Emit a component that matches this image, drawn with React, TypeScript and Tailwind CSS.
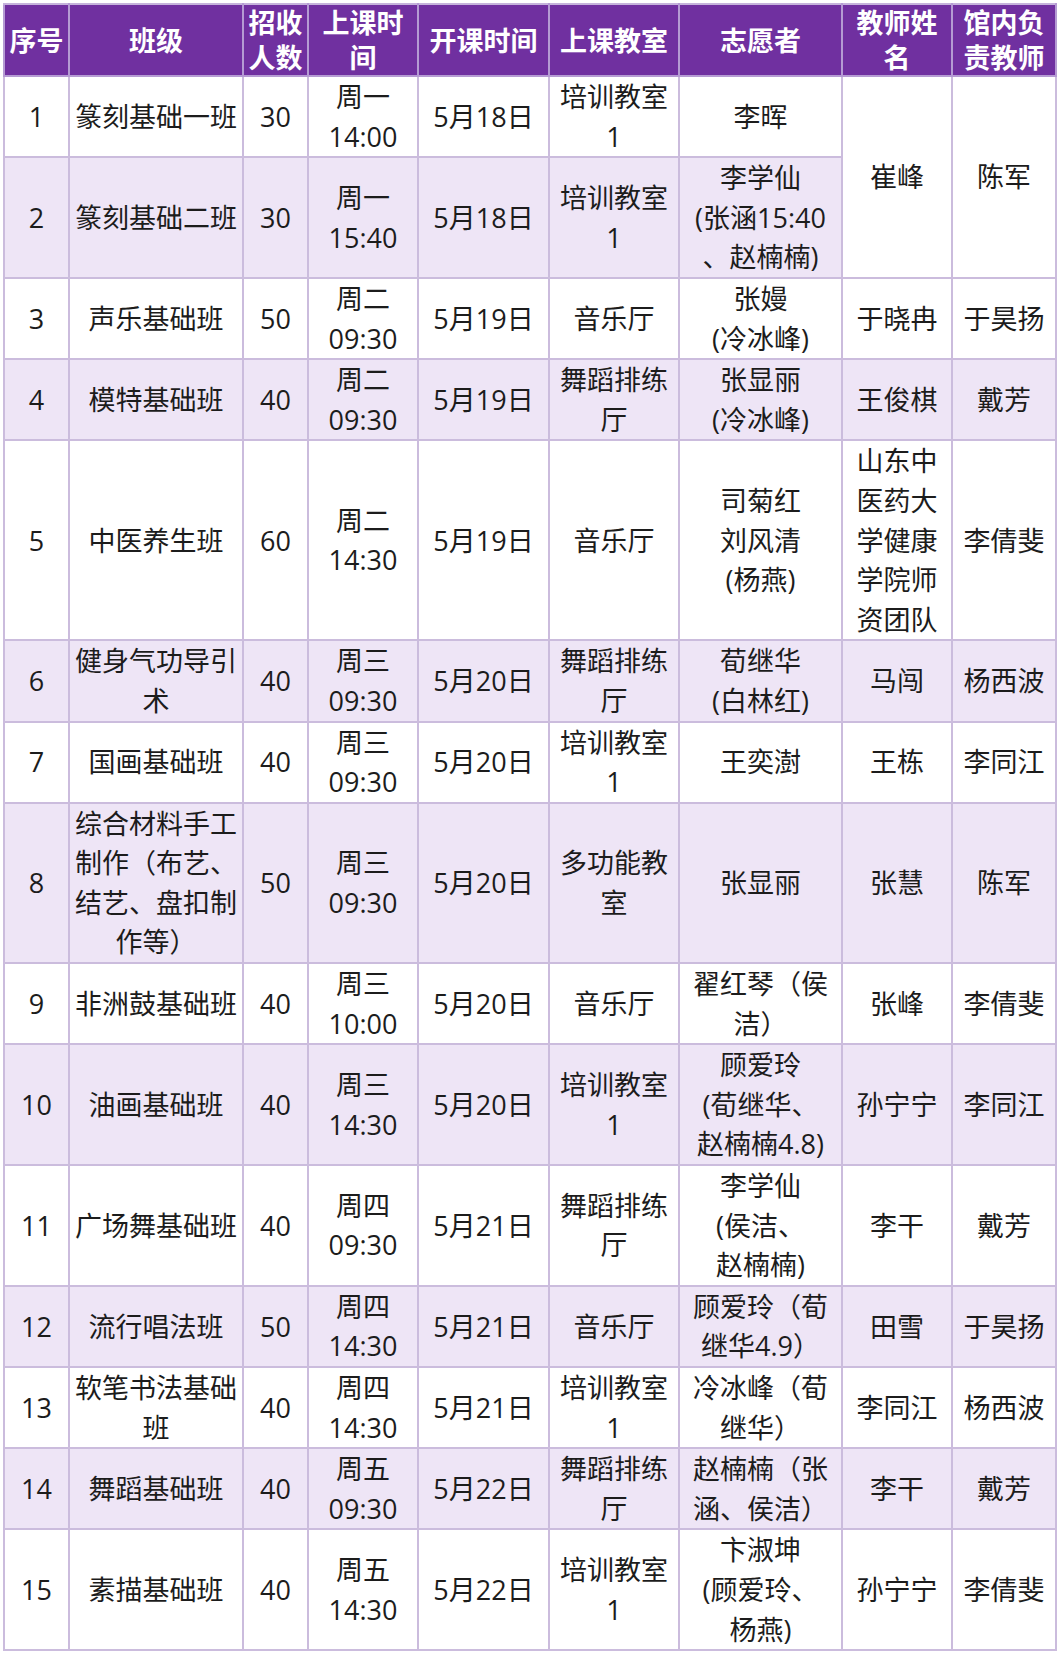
import React from "react";

type Row = {
  n: string;
  c: string[];
  k: string;
  t: string[];
  d: string;
  r: string[];
  v: string[];
  te?: string[];
  m?: string[];
};

const rows: Row[] = [
  { n: "1", c: ["篆刻基础一班"], k: "30", t: ["周一", "14:00"], d: "5月18日", r: ["培训教室", "1"], v: ["李晖"] },
  { n: "2", c: ["篆刻基础二班"], k: "30", t: ["周一", "15:40"], d: "5月18日", r: ["培训教室", "1"], v: ["李学仙", "(张涵15:40", "、赵楠楠)"] },
  { n: "3", c: ["声乐基础班"], k: "50", t: ["周二", "09:30"], d: "5月19日", r: ["音乐厅"], v: ["张嫚", "(冷冰峰)"], te: ["于晓冉"], m: ["于昊扬"] },
  { n: "4", c: ["模特基础班"], k: "40", t: ["周二", "09:30"], d: "5月19日", r: ["舞蹈排练", "厅"], v: ["张显丽", "(冷冰峰)"], te: ["王俊棋"], m: ["戴芳"] },
  { n: "5", c: ["中医养生班"], k: "60", t: ["周二", "14:30"], d: "5月19日", r: ["音乐厅"], v: ["司菊红", "刘风清", "(杨燕)"], te: ["山东中", "医药大", "学健康", "学院师", "资团队"], m: ["李倩斐"] },
  { n: "6", c: ["健身气功导引", "术"], k: "40", t: ["周三", "09:30"], d: "5月20日", r: ["舞蹈排练", "厅"], v: ["荀继华", "(白林红)"], te: ["马闯"], m: ["杨西波"] },
  { n: "7", c: ["国画基础班"], k: "40", t: ["周三", "09:30"], d: "5月20日", r: ["培训教室", "1"], v: ["王奕澍"], te: ["王栋"], m: ["李同江"] },
  { n: "8", c: ["综合材料手工", "制作（布艺、", "结艺、盘扣制", "作等）"], k: "50", t: ["周三", "09:30"], d: "5月20日", r: ["多功能教", "室"], v: ["张显丽"], te: ["张慧"], m: ["陈军"] },
  { n: "9", c: ["非洲鼓基础班"], k: "40", t: ["周三", "10:00"], d: "5月20日", r: ["音乐厅"], v: ["翟红琴（侯", "洁）"], te: ["张峰"], m: ["李倩斐"] },
  { n: "10", c: ["油画基础班"], k: "40", t: ["周三", "14:30"], d: "5月20日", r: ["培训教室", "1"], v: ["顾爱玲", "(荀继华、", "赵楠楠4.8)"], te: ["孙宁宁"], m: ["李同江"] },
  { n: "11", c: ["广场舞基础班"], k: "40", t: ["周四", "09:30"], d: "5月21日", r: ["舞蹈排练", "厅"], v: ["李学仙", "(侯洁、", "赵楠楠)"], te: ["李干"], m: ["戴芳"] },
  { n: "12", c: ["流行唱法班"], k: "50", t: ["周四", "14:30"], d: "5月21日", r: ["音乐厅"], v: ["顾爱玲（荀", "继华4.9）"], te: ["田雪"], m: ["于昊扬"] },
  { n: "13", c: ["软笔书法基础", "班"], k: "40", t: ["周四", "14:30"], d: "5月21日", r: ["培训教室", "1"], v: ["冷冰峰（荀", "继华）"], te: ["李同江"], m: ["杨西波"] },
  { n: "14", c: ["舞蹈基础班"], k: "40", t: ["周五", "09:30"], d: "5月22日", r: ["舞蹈排练", "厅"], v: ["赵楠楠（张", "涵、侯洁）"], te: ["李干"], m: ["戴芳"] },
  { n: "15", c: ["素描基础班"], k: "40", t: ["周五", "14:30"], d: "5月22日", r: ["培训教室", "1"], v: ["卞淑坤", "(顾爱玲、", "杨燕)"], te: ["孙宁宁"], m: ["李倩斐"] },
];

const headers: string[][] = [
  ["序号"],
  ["班级"],
  ["招收", "人数"],
  ["上课时", "间"],
  ["开课时间"],
  ["上课教室"],
  ["志愿者"],
  ["教师姓", "名"],
  ["馆内负", "责教师"],
];

const widths = [65, 174, 65, 110, 131, 130, 163, 110, 104];

function Lines({ lines }: { lines: string[] }) {
  return (
    <>
      {lines.map((l, i) => (
        <div key={i} className="whitespace-nowrap">
          {l}
        </div>
      ))}
    </>
  );
}

const td =
  "border-2 border-[#cbbcdd] text-center align-middle p-0 text-[27px] leading-[39.6px] text-[#1c1c1c]";

export default function App() {
  return (
    <div
      className="bg-white pt-[3px] pl-[3px] w-[1059px] min-h-[1655px]"
      style={{ fontFamily: '"Open Sans", "Noto Sans CJK SC", sans-serif' }}
    >
      <table className="table-fixed border-collapse w-[1052px] border-2 border-[#66606e]">
        <colgroup>
          {widths.map((w, i) => (
            <col key={i} style={{ width: w }} />
          ))}
        </colgroup>
        <thead>
          <tr className="bg-[#7030a0]">
            {headers.map((h, i) => (
              <th
                key={i}
                className="border-2 border-[#b59bd3] border-t-[#c6b3dc] text-center align-middle p-0 h-[72px] text-[27px] leading-[35px] font-bold text-white"
              >
                <Lines lines={h} />
              </th>
            ))}
          </tr>
        </thead>
        <tbody>
          {rows.map((row, idx) => {
            const bg = idx % 2 === 1 ? "bg-[#eee5f6]" : "bg-white";
            return (
              <tr key={row.n} className={bg}>
                <td className={td}>{row.n}</td>
                <td className={td}>
                  <Lines lines={row.c} />
                </td>
                <td className={td}>{row.k}</td>
                <td className={td}>
                  <Lines lines={row.t} />
                </td>
                <td className={td}>{row.d}</td>
                <td className={td}>
                  <Lines lines={row.r} />
                </td>
                <td className={td}>
                  <Lines lines={row.v} />
                </td>
                {idx === 0 ? (
                  <>
                    <td rowSpan={2} className={td + " bg-white"}>
                      崔峰
                    </td>
                    <td rowSpan={2} className={td + " bg-white"}>
                      陈军
                    </td>
                  </>
                ) : idx === 1 ? null : (
                  <>
                    <td className={td}>
                      <Lines lines={row.te || []} />
                    </td>
                    <td className={td}>
                      <Lines lines={row.m || []} />
                    </td>
                  </>
                )}
              </tr>
            );
          })}
        </tbody>
      </table>
    </div>
  );
}
